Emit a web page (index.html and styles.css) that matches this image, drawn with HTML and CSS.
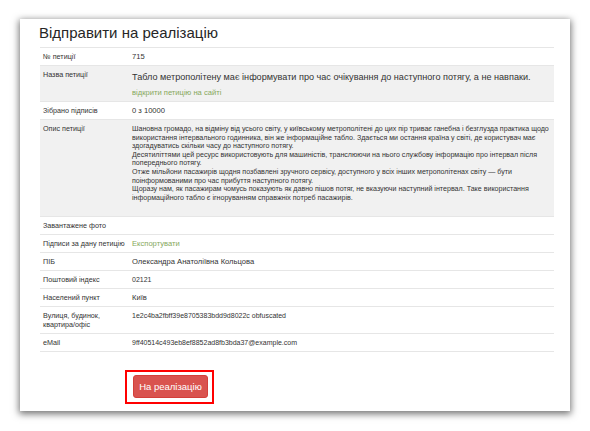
FILE: index.html
```html
<!DOCTYPE html>
<html lang="uk">
<head>
<meta charset="utf-8">
<title>Відправити на реалізацію</title>
<link rel="stylesheet" href="styles.css">
</head>
<body>
<div class="page">
  <div class="card">
    <h1 class="title">Відправити на реалізацію</h1>
    <table class="info">
      <tr>
        <td class="label">№ петиції</td>
        <td>715</td>
      </tr>
      <tr class="alt">
        <td class="label">Назва петиції</td>
        <td>
          <div class="pet-name">Табло метрополітену має інформувати про час очікування до наступного потягу, а не навпаки.</div>
          <a class="link" href="#">відкрити петицію на сайті</a>
        </td>
      </tr>
      <tr>
        <td class="label">Зібрано підписів</td>
        <td>0 з 10000</td>
      </tr>
      <tr class="alt">
        <td class="label">Опис петиції</td>
        <td class="desc">Шановна громадо, на відміну від усього світу, у київському метрополітені до цих пір триває ганебна і безглузда практика щодо використання інтервального годинника, він же інформаційне табло. Здається ми остання країна у світі, де користувач має здогадуватись скільки часу до наступного потягу.<br>Десятиліттями цей ресурс використовують для машиністів, транслюючи на нього службову інформацію про інтервал після попереднього потягу.<br>Отже мільйони пасажирів щодня позбавлені зручного сервісу, доступного у всіх інших метрополітенах світу — бути поінформованими про час прибуття наступного потягу.<br>Щоразу нам, як пасажирам чомусь показують як давно пішов потяг, не вказуючи наступний інтервал. Таке використання інформаційного табло є ігноруванням справжніх потреб пасажирів.</td>
      </tr>
      <tr>
        <td class="label">Завантажене фото</td>
        <td></td>
      </tr>
      <tr>
        <td class="label">Підписи за дану петицію</td>
        <td><a class="link" href="#">Експортувати</a></td>
      </tr>
      <tr>
        <td class="label">ПІБ</td>
        <td>Олександра Анатоліївна Кольцова</td>
      </tr>
      <tr>
        <td class="label">Поштовий індекс</td>
        <td class="code">02121</td>
      </tr>
      <tr>
        <td class="label">Населений пункт</td>
        <td>Київ</td>
      </tr>
      <tr>
        <td class="label">Вулиця, будинок, квартира/офіс</td>
        <td class="code">1e2c4ba2fbff39e8705383bdd9d8022c obfuscated</td>
      </tr>
      <tr class="last">
        <td class="label">eMail</td>
        <td class="code">9ff40514c493eb8ef8852ad8fb3bda37@example.com</td>
      </tr>
    </table>
    <div class="actions">
      <div class="highlight">
        <button class="btn-danger" type="button">На реалізацію</button>
      </div>
    </div>
  </div>
</div>
</body>
</html>
```
FILE: styles.css
```css
html, body {
  margin: 0;
  padding: 0;
  background: #ffffff;
}

body {
  font-family: "Liberation Sans", Arial, sans-serif;
  color: #333333;
}

.page {
  padding: 19px 20px 20px 20px;
}

.card {
  background: #ffffff;
  height: 392px;
  box-sizing: border-box;
  padding: 5px 16px 0 20px;
  box-shadow: 0 2px 7px 1px rgba(0, 0, 0, 0.55);
}

.title {
  margin: 0 0 6px -1px;
  font-size: 15px;
  line-height: 17px;
  font-weight: normal;
  color: #262626;
}

.info {
  width: 514px;
  border-collapse: collapse;
  font-size: 7.6px;
  line-height: 9px;
}

.info td {
  border-top: 1px solid #e6e6e6;
  padding: 4px 0 4px 3px;
  vertical-align: top;
}

.info tr.last td {
  border-bottom: 1px solid #e6e6e6;
}

.info td.label {
  width: 86px;
  padding-right: 0;
  font-size: 7.2px;
}

.info td.code {
  font-size: 7px;
}

.info tr.alt td {
  background: #f1f1f1;
}

.pet-name {
  font-size: 9.1px;
  line-height: 13px;
  margin: 1px 0 4px 0;
  color: #333333;
}

.link {
  color: #86a85c;
  text-decoration: none;
}

.info td.desc {
  font-size: 7.1px;
  line-height: 8.6px;
  padding-top: 5px;
  padding-bottom: 14px;
}

.actions {
  display: flex;
  justify-content: flex-start;
  padding: 18px 0 0 85px;
}

.highlight {
  border: 2px solid #ff0000;
  padding: 3px 4px 4px 6px;
}

.btn-danger {
  display: block;
  width: 75px;
  height: 23px;
  border: 1px solid #d43f3a;
  border-radius: 3px;
  background: #d9534f;
  color: #ffffff;
  font-family: "Liberation Sans", Arial, sans-serif;
  font-size: 9.5px;
  padding: 0;
  cursor: pointer;
}
```
